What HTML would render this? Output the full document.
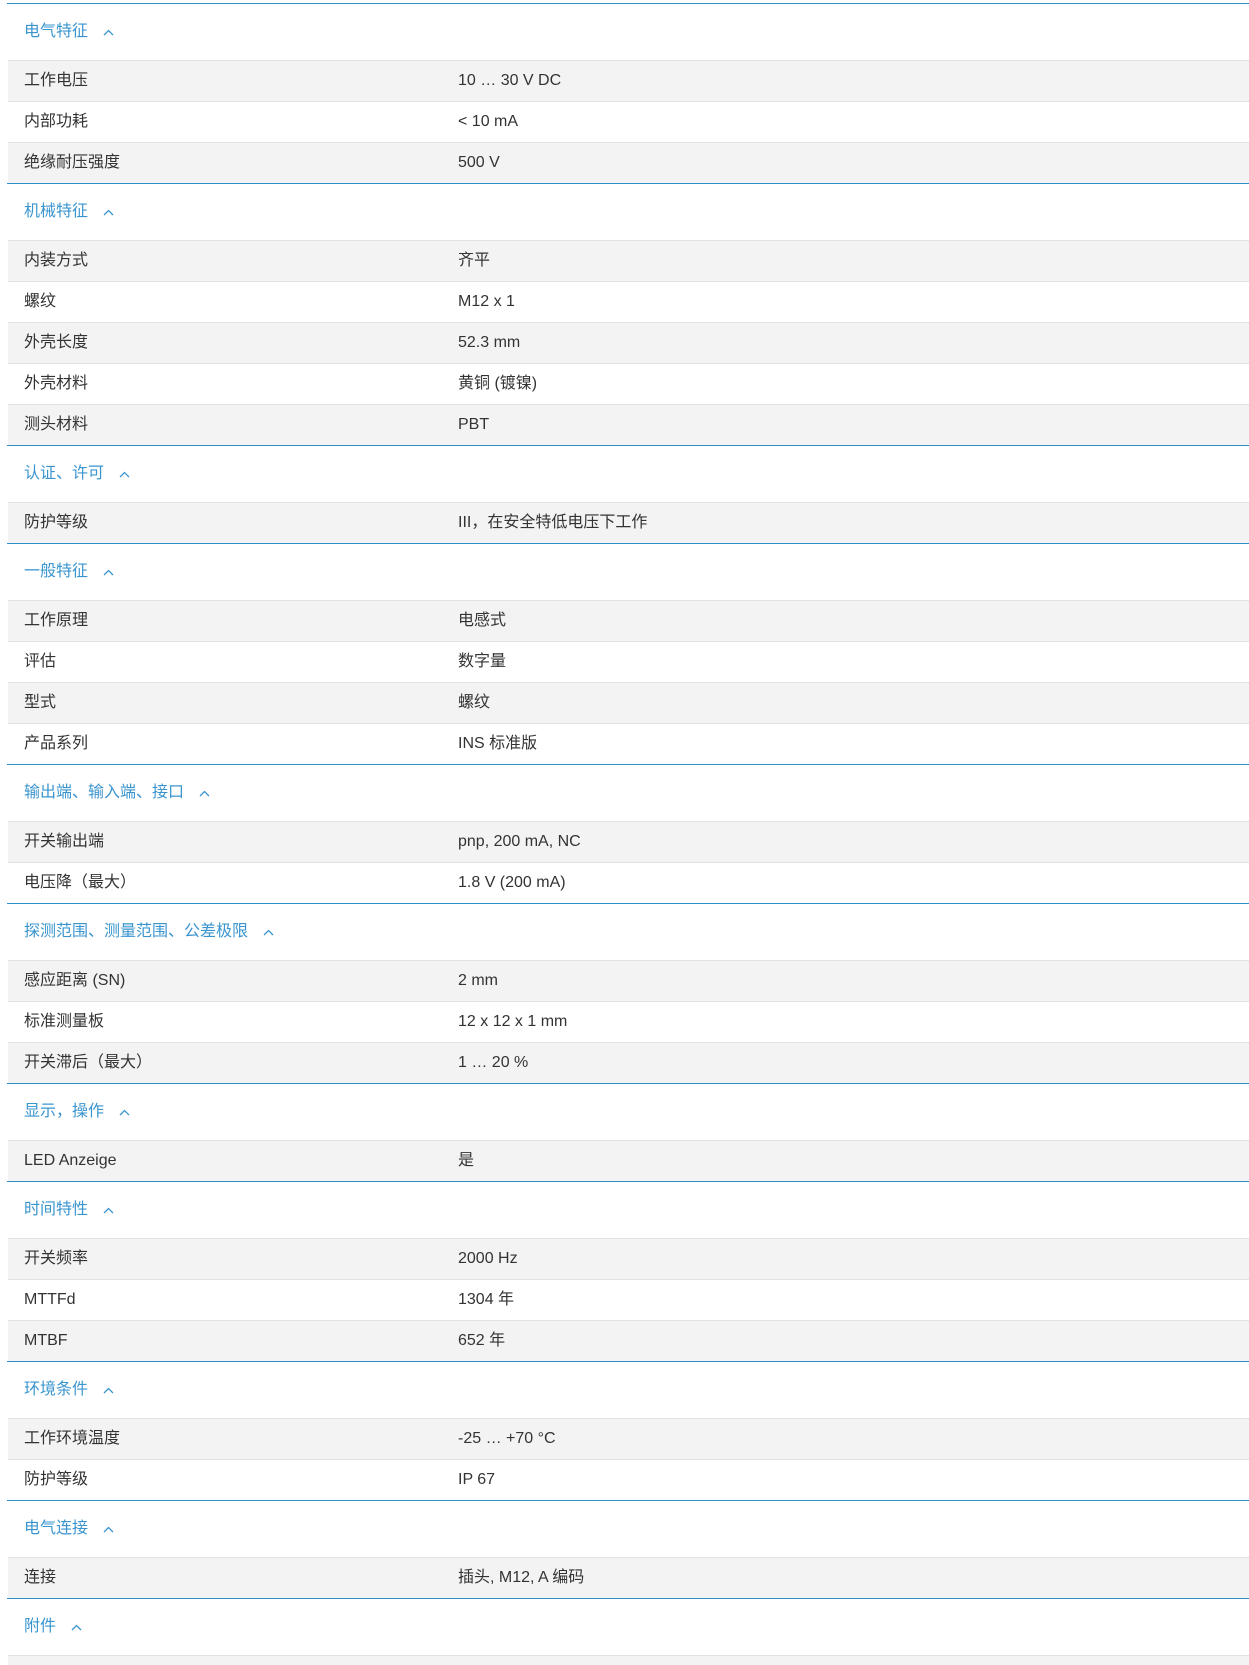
<!DOCTYPE html>
<html><head><meta charset="utf-8"><style>
html,body{height:1665px;overflow:hidden;}
body{margin:0;background:#fff;font-family:"Liberation Sans","Noto Sans CJK SC",sans-serif;font-size:16px;color:#333;}
.wrap{padding-top:3px;margin-left:7px;width:1242px;}
.sec{border-top:1px solid #2e90c4;}
.hd{height:56px;display:flex;align-items:center;padding-left:17px;color:#3a95cf;line-height:20px;}
.hd svg{margin-left:15px;}
.row{height:40px;border-top:1px solid #e2e2e2;display:flex;align-items:center;margin-left:1px;}
.row:nth-of-type(even){background:#f3f3f3;}
.row:nth-of-type(odd){background:#fff;}
.k,.v{line-height:20px;height:20px;overflow:visible;}
.k{width:434px;padding-left:16px;}
.v{flex:1;}
</style></head><body><div class="wrap">
<div class="sec"><div class="hd">电气特征<svg width="11" height="7" viewBox="0 0 11 7"><path d="M1 6L5.5 1.5L10 6" fill="none" stroke="#3a95cf" stroke-width="1.3"/></svg></div>
<div class="row"><div class="k">工作电压</div><div class="v">10 … 30 V DC</div></div>
<div class="row"><div class="k">内部功耗</div><div class="v">&lt; 10 mA</div></div>
<div class="row"><div class="k">绝缘耐压强度</div><div class="v">500 V</div></div></div>
<div class="sec"><div class="hd">机械特征<svg width="11" height="7" viewBox="0 0 11 7"><path d="M1 6L5.5 1.5L10 6" fill="none" stroke="#3a95cf" stroke-width="1.3"/></svg></div>
<div class="row"><div class="k">内装方式</div><div class="v">齐平</div></div>
<div class="row"><div class="k">螺纹</div><div class="v">M12 x 1</div></div>
<div class="row"><div class="k">外壳长度</div><div class="v">52.3 mm</div></div>
<div class="row"><div class="k">外壳材料</div><div class="v">黄铜 (镀镍)</div></div>
<div class="row"><div class="k">测头材料</div><div class="v">PBT</div></div></div>
<div class="sec"><div class="hd">认证、许可<svg width="11" height="7" viewBox="0 0 11 7"><path d="M1 6L5.5 1.5L10 6" fill="none" stroke="#3a95cf" stroke-width="1.3"/></svg></div>
<div class="row"><div class="k">防护等级</div><div class="v">III，在安全特低电压下工作</div></div></div>
<div class="sec"><div class="hd">一般特征<svg width="11" height="7" viewBox="0 0 11 7"><path d="M1 6L5.5 1.5L10 6" fill="none" stroke="#3a95cf" stroke-width="1.3"/></svg></div>
<div class="row"><div class="k">工作原理</div><div class="v">电感式</div></div>
<div class="row"><div class="k">评估</div><div class="v">数字量</div></div>
<div class="row"><div class="k">型式</div><div class="v">螺纹</div></div>
<div class="row"><div class="k">产品系列</div><div class="v">INS 标准版</div></div></div>
<div class="sec"><div class="hd">输出端、输入端、接口<svg width="11" height="7" viewBox="0 0 11 7"><path d="M1 6L5.5 1.5L10 6" fill="none" stroke="#3a95cf" stroke-width="1.3"/></svg></div>
<div class="row"><div class="k">开关输出端</div><div class="v">pnp, 200 mA, NC</div></div>
<div class="row"><div class="k">电压降（最大）</div><div class="v">1.8 V (200 mA)</div></div></div>
<div class="sec"><div class="hd">探测范围、测量范围、公差极限<svg width="11" height="7" viewBox="0 0 11 7"><path d="M1 6L5.5 1.5L10 6" fill="none" stroke="#3a95cf" stroke-width="1.3"/></svg></div>
<div class="row"><div class="k">感应距离 (SN)</div><div class="v">2 mm</div></div>
<div class="row"><div class="k">标准测量板</div><div class="v">12 x 12 x 1 mm</div></div>
<div class="row"><div class="k">开关滞后（最大）</div><div class="v">1 … 20 %</div></div></div>
<div class="sec"><div class="hd">显示，操作<svg width="11" height="7" viewBox="0 0 11 7"><path d="M1 6L5.5 1.5L10 6" fill="none" stroke="#3a95cf" stroke-width="1.3"/></svg></div>
<div class="row"><div class="k">LED Anzeige</div><div class="v">是</div></div></div>
<div class="sec"><div class="hd">时间特性<svg width="11" height="7" viewBox="0 0 11 7"><path d="M1 6L5.5 1.5L10 6" fill="none" stroke="#3a95cf" stroke-width="1.3"/></svg></div>
<div class="row"><div class="k">开关频率</div><div class="v">2000 Hz</div></div>
<div class="row"><div class="k">MTTFd</div><div class="v">1304 年</div></div>
<div class="row"><div class="k">MTBF</div><div class="v">652 年</div></div></div>
<div class="sec"><div class="hd">环境条件<svg width="11" height="7" viewBox="0 0 11 7"><path d="M1 6L5.5 1.5L10 6" fill="none" stroke="#3a95cf" stroke-width="1.3"/></svg></div>
<div class="row"><div class="k">工作环境温度</div><div class="v">-25 … +70 °C</div></div>
<div class="row"><div class="k">防护等级</div><div class="v">IP 67</div></div></div>
<div class="sec"><div class="hd">电气连接<svg width="11" height="7" viewBox="0 0 11 7"><path d="M1 6L5.5 1.5L10 6" fill="none" stroke="#3a95cf" stroke-width="1.3"/></svg></div>
<div class="row"><div class="k">连接</div><div class="v">插头, M12, A 编码</div></div></div>
<div class="sec"><div class="hd">附件<svg width="11" height="7" viewBox="0 0 11 7"><path d="M1 6L5.5 1.5L10 6" fill="none" stroke="#3a95cf" stroke-width="1.3"/></svg></div>
<div class="row"><div class="k"></div><div class="v"></div></div></div>
</div></body></html>
